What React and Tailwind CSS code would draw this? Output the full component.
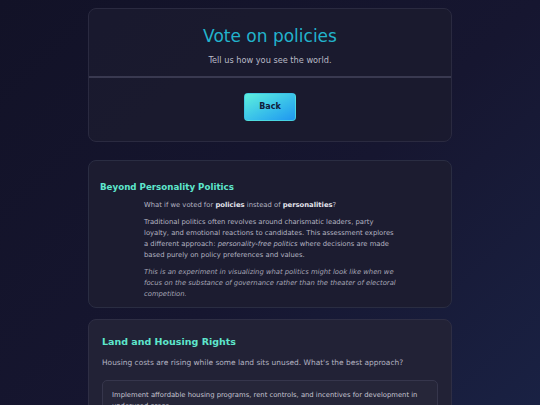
export default function App() {
  return (
    <div
      className="min-h-screen w-full bg-linear-to-br from-[#121227] via-[#161630] to-[#1a2448] pt-[8px] pb-6"
      style={{ fontFamily: '"DejaVu Sans", Verdana, sans-serif' }}
    >
      <div className="mx-auto flex w-[364px] flex-col">
        {/* Header card */}
        <div className="overflow-hidden rounded-[8px] border border-[#2a2a40] bg-[#1b1b2f]/90">
          <div className="border-b-2 border-[#393950] px-4 pt-[15px] pb-[10px] text-center">
            <h1 className="text-[17px] leading-[24px] text-[#22b3cc]">Vote on policies</h1>
            <p className="mt-[6px] text-[8.2px] leading-[12px] text-[#b9b9c6]">
              Tell us how you see the world.
            </p>
          </div>
          <div className="flex justify-center pt-[15px] pb-[20px]">
            <button className="h-[28px] w-[52px] rounded-[4px] border border-[#4ad6e0]/60 bg-linear-to-br from-[#5ef0dc] to-[#2196f0] text-[8px] font-bold text-[#10203a]">
              Back
            </button>
          </div>
        </div>

        {/* Intro card */}
        <div className="mt-[18px] rounded-[8px] border border-[#2a2d42] bg-[#1c1c30] px-[11px] pt-[19px] pb-[7px]">
          <h2 className="text-[8.7px] font-bold leading-[14px] text-[#5ee6cc]">Beyond Personality Politics</h2>
          <div className="mx-auto mt-[6px] w-[252px] text-[6.8px] leading-[11px] text-[#b4b4c2]">
            <p>
              What if we voted for <strong className="text-[#e4e4ec]">policies</strong> instead of{" "}
              <strong className="text-[#e4e4ec]">personalities</strong>?
            </p>
            <p className="mt-[6px]">
              Traditional politics often revolves around charismatic leaders, party loyalty, and emotional
              reactions to candidates. This assessment explores a different approach:{" "}
              <em>personality-free politics</em> where decisions are made based purely on policy preferences
              and values.
            </p>
            <p className="mt-[6px] italic text-[#a4a4b4]">
              This is an experiment in visualizing what politics might look like when we focus on the
              substance of governance rather than the theater of electoral competition.
            </p>
          </div>
        </div>

        {/* Question card */}
        <div className="mt-[11px] rounded-[8px] border border-[#2e2e44] bg-[#222236] px-[13px] pt-[14px] pb-4">
          <h2 className="text-[9.5px] font-bold leading-[16px] text-[#5ee6cc]">Land and Housing Rights</h2>
          <p className="mt-[7px] text-[7.45px] leading-[12px] text-[#b4b4c2]">
            Housing costs are rising while some land sits unused. What's the best approach?
          </p>
          <div className="mt-[11px] flex flex-col gap-2">
            <div className="rounded-[5px] border border-[#36364c] bg-[#262639] px-[9px] py-[9px] text-[6.8px] leading-[11px] text-[#c4c4d0]">
              Implement affordable housing programs, rent controls, and incentives for development in
              underused areas.
            </div>
            <div className="rounded-[5px] border border-[#36364c] bg-[#262639] px-[9px] py-[9px] text-[6.8px] leading-[11px] text-[#c4c4d0]">
              Introduce a land value tax so unused land is taxed and encouraged into productive use.
            </div>
          </div>
        </div>
      </div>
    </div>
  );
}
